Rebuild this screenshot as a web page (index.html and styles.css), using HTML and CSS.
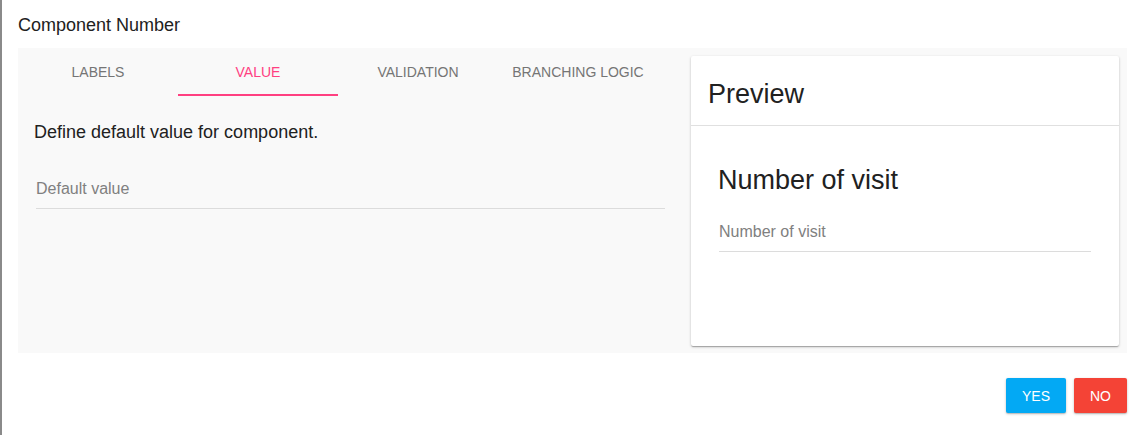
FILE: index.html
```html
<!DOCTYPE html>
<html lang="en">
<head>
<meta charset="utf-8">
<title>Component Number</title>
<link rel="stylesheet" href="styles.css">
</head>
<body>
<div class="dialog">
  <h2 class="dialog-title">Component Number</h2>
  <div class="panel">
    <div class="editor">
      <div class="tabs">
        <div class="tab">Labels</div>
        <div class="tab active">Value</div>
        <div class="tab">Validation</div>
        <div class="tab">Branching Logic</div>
      </div>
      <div class="editor-body">
        <p class="hint">Define default value for component.</p>
        <input class="field field-left" type="text" placeholder="Default value">
      </div>
    </div>
    <div class="card">
      <div class="card-header">Preview</div>
      <div class="card-body">
        <h3 class="preview-title">Number of visit</h3>
        <input class="field" type="text" placeholder="Number of visit">
      </div>
    </div>
  </div>
  <div class="actions">
    <button class="btn btn-yes">Yes</button>
    <button class="btn btn-no">No</button>
  </div>
</div>
</body>
</html>
```

FILE: styles.css
```css
html, body {
  margin: 0;
  padding: 0;
  background: #ffffff;
  font-family: "Liberation Sans", Arial, sans-serif;
  color: #212121;
}

.dialog {
  border-left: 2px solid #8a8a8a;
  min-height: 435px;
  box-sizing: border-box;
  padding: 0 14px 0 16px;
}

.dialog-title {
  margin: 0;
  padding-top: 2px;
  font-size: 18px;
  font-weight: normal;
  line-height: 46px;
  color: #212121;
}

.panel {
  display: flex;
  background: #f9f9f9;
}

.editor {
  flex: 1;
  min-width: 0;
}

.tabs {
  display: flex;
  height: 48px;
}

.tab {
  width: 160px;
  box-sizing: border-box;
  padding-top: 2px;
  text-align: center;
  font-size: 14px;
  line-height: 44px;
  text-transform: uppercase;
  color: #757575;
  border-bottom: 2px solid transparent;
}

.tab.active {
  color: #ff4081;
  border-bottom-color: #ff4081;
}

.editor-body {
  padding: 0 16px;
}

.hint {
  margin: 24px 0 0;
  font-size: 18px;
  line-height: 24px;
  color: #212121;
}

.field {
  display: block;
  box-sizing: content-box;
  width: 100%;
  height: 38px;
  padding: 2px 0 0;
  border: none;
  border-bottom: 1px solid #dcdcdc;
  background: transparent;
  font-family: "Liberation Sans", Arial, sans-serif;
  font-size: 16px;
  color: #212121;
  outline: none;
}

.field::placeholder {
  color: #808080;
}

.field-left {
  margin: 24px 2px 0;
  width: calc(100% - 4px);
}

.card {
  width: 428px;
  margin: 8px 8px 7px 8px;
  background: #ffffff;
  border-radius: 2px;
  box-shadow: 0 1px 3px rgba(0, 0, 0, 0.2), 0 1px 1px rgba(0, 0, 0, 0.14), 0 2px 1px -1px rgba(0, 0, 0, 0.12);
}

.card-header {
  height: 70px;
  box-sizing: border-box;
  padding: 2px 17px 0;
  border-bottom: 1px solid #e0e0e0;
  font-size: 27px;
  line-height: 72px;
  color: #212121;
}

.card-body {
  height: 220px;
  box-sizing: border-box;
  padding: 0 28px 0 27px;
}

.preview-title {
  margin: 0;
  padding-top: 38px;
  font-size: 27px;
  font-weight: normal;
  line-height: 32px;
  color: #212121;
}

.card-body .field {
  margin-top: 15px;
  margin-left: 1px;
  width: calc(100% - 1px);
}

.actions {
  display: flex;
  justify-content: flex-end;
  gap: 8px;
  padding-top: 25px;
}

.btn {
  height: 35px;
  padding: 0 16px;
  border: none;
  border-radius: 2px;
  font-family: "Liberation Sans", Arial, sans-serif;
  font-size: 14px;
  text-transform: uppercase;
  color: #ffffff;
  box-shadow: 0 1px 3px rgba(0, 0, 0, 0.2), 0 1px 1px rgba(0, 0, 0, 0.14);
  cursor: pointer;
}

.btn-yes {
  background: #03a9f4;
}

.btn-no {
  background: #f44336;
}
```
